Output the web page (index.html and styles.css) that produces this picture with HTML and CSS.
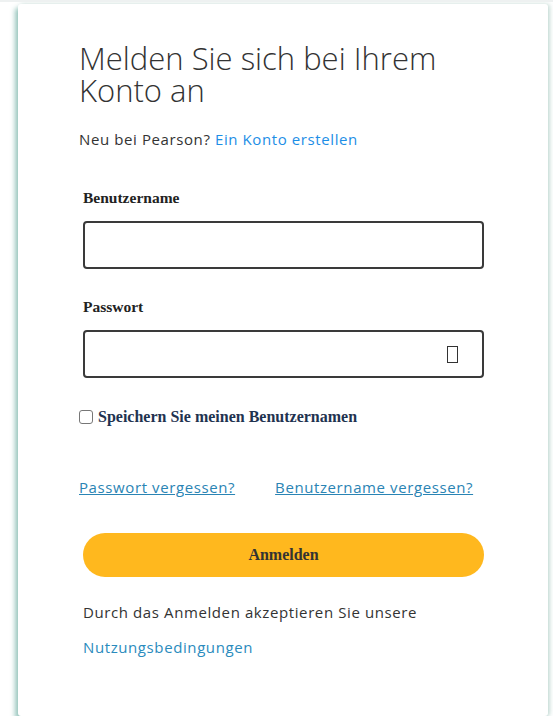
FILE: index.html
```html
<!DOCTYPE html>
<html lang="de">
<head>
    <meta charset="UTF-8">
    <title>Anmelden</title>
    <link rel="stylesheet" href="styles.css">
</head>
<body>
    <div class="card">
        <h1 class="title">Melden Sie sich bei Ihrem Konto an</h1>
        <p class="signup">Neu bei Pearson? <a href="#">Ein Konto erstellen</a></p>

        <form class="form">
            <label class="label" for="user">Benutzername</label>
            <input class="field" id="user" type="text">

            <label class="label" for="pass">Passwort</label>
            <div class="field pass">
                <span class="eye"></span>
            </div>

            <label class="remember">
                <span class="box"></span>
                Speichern Sie meinen Benutzernamen
            </label>
        </form>

        <div class="forgot">
            <a href="#">Passwort vergessen?</a>
            <a href="#">Benutzername vergessen?</a>
        </div>

        <button class="submit">Anmelden</button>

        <p class="terms">Durch das Anmelden akzeptieren Sie unsere</p>
        <a class="terms-link" href="#">Nutzungsbedingungen</a>
    </div>
</body>
</html>
```

FILE: styles.css
```css
body{
    margin: 0;
    background: #fff;
    border-top: 2px solid #eef1f1;
    font-family: "Open Sans", "Liberation Sans", sans-serif;
    color: #333;
}
.card{
    box-sizing: border-box;
    width: 530px;
    height: 712px;
    margin: 2px 0 0 18px;
    padding: 38px 64px 0 61px;
    background: #fff;
    border-radius: 3px;
    box-shadow: -3px 4px 5px rgba(120, 180, 170, 0.75), 2px 0 4px rgba(150, 190, 180, 0.5);
}
.title{
    margin: 0;
    font-size: 31px;
    font-weight: 300;
    line-height: 32px;
    color: #333;
}
.signup{
    margin: 23px 0 0;
    font-size: 15px;
    letter-spacing: 0.6px;
    color: #333;
}
.signup a{
    color: #1d8ee6;
    text-decoration: none;
}
.form{
    margin-top: 40px;
    padding-left: 4px;
}
.label{
    display: block;
    font-family: "Liberation Serif", serif;
    font-weight: bold;
    font-size: 15.5px;
    color: #222;
    margin-bottom: 14px;
}
.field{
    display: block;
    box-sizing: border-box;
    width: 401px;
    height: 48px;
    border: 2px solid #3a3a3a;
    border-radius: 4px;
    margin: 0 0 29px;
    background: #fff;
}
.pass{
    display: flex;
    justify-content: flex-end;
    align-items: center;
    padding-right: 24px;
    margin-bottom: 30px;
}
.eye{
    width: 9px;
    height: 15px;
    border: 1px solid #333;
}
.remember{
    display: flex;
    align-items: center;
    gap: 5px;
    margin-left: -4px;
    font-family: "Liberation Serif", serif;
    font-weight: bold;
    font-size: 16px;
    color: #1f3350;
}
.box{
    width: 12px;
    height: 12px;
    border: 1px solid #777;
    border-radius: 3px;
}
.forgot{
    display: flex;
    gap: 40px;
    margin-top: 51px;
    font-size: 15px;
    letter-spacing: 0.6px;
}
.forgot a{
    color: #2a84b4;
}
.submit{
    display: block;
    width: 401px;
    height: 44px;
    margin: 36px 0 0 4px;
    border: 0;
    border-radius: 22px;
    background: #ffb81e;
    font-family: "Liberation Serif", serif;
    font-weight: bold;
    font-size: 16px;
    color: #333;
}
.terms{
    margin: 25px 0 0 4px;
    font-size: 15px;
    letter-spacing: 0.6px;
    color: #333;
}
.terms-link{
    display: block;
    margin: 15px 0 0 4px;
    font-size: 15px;
    letter-spacing: 0.6px;
    color: #2a8bbd;
    text-decoration: none;
}
```
